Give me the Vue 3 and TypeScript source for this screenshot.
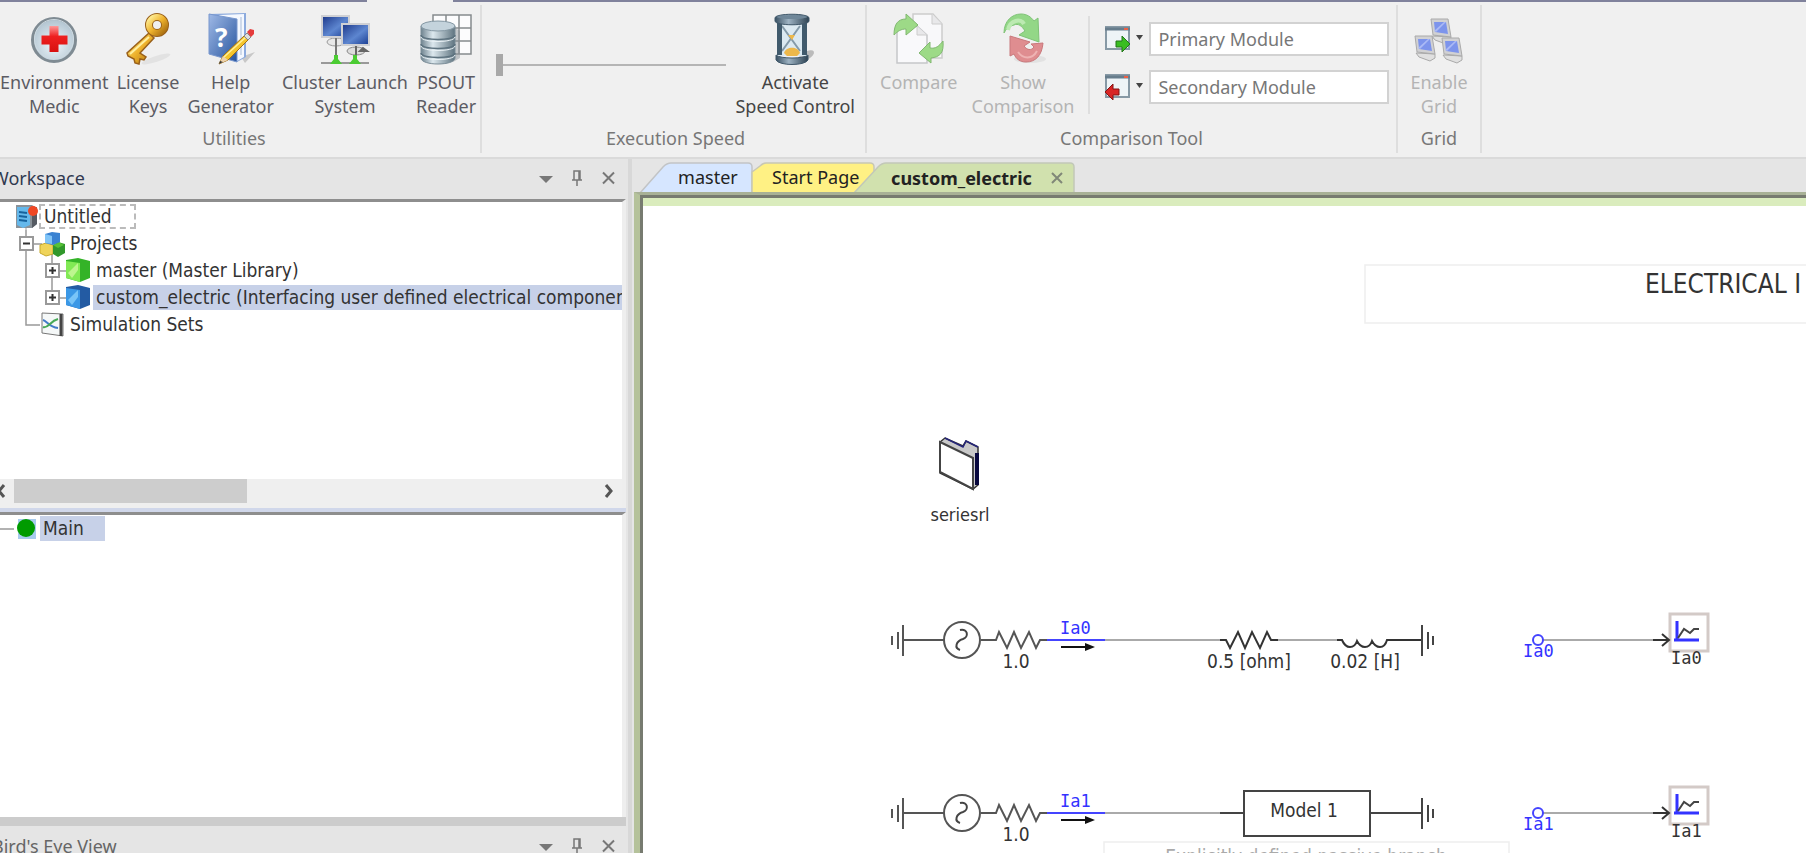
<script setup lang="ts">
import { ref } from 'vue'

interface Row {
  y: number
  name: string
}

const speed = ref(0)
const primary = ref('Primary Module')
const secondary = ref('Secondary Module')
const rows: Row[] = [
  { y: 442, name: 'Ia0' },
  { y: 615, name: 'Ia1' },
]
const windowButtons = ['Menu', 'Pin', 'Close']
</script>

<template>
  <div class="app">
    <header class="ribbon">
      <div class="ribbon-edge"><span class="edge-left"></span><span class="edge-right"></span></div>
      <div class="groups">
        <section class="group utilities">
          <div class="tools">
            <button class="tool">
              <svg width="52" height="52" viewBox="0 0 52 52">
                <defs>
                  <radialGradient id="medic" cx="50%" cy="60%" r="55%">
                    <stop offset="0" stop-color="#eef7fc" /><stop offset="1" stop-color="#b4c6d2" />
                  </radialGradient>
                  <linearGradient id="cross" x1="0" y1="0" x2="0" y2="1">
                    <stop offset="0" stop-color="#f99" /><stop offset=".4" stop-color="#ee2020" /><stop offset="1" stop-color="#d81010" />
                  </linearGradient>
                </defs>
                <circle cx="26" cy="27" r="21.500" fill="url(#medic)" stroke="#7f8b93" stroke-width="3" />
                <circle cx="26" cy="26" r="19.500" fill="none" stroke="#cfdbe2" stroke-width="1" />
                <path d="M21.500 13h9v9.500h9v9h-9V39h-9v-7.500h-8v-9h8z" fill="url(#cross)" />
              </svg>
              <span>Environment<br />Medic</span>
            </button>
            <button class="tool">
              <svg width="52" height="52" viewBox="0 0 52 52">
                <defs>
                  <linearGradient id="gold" x1="0" y1="0" x2="1" y2="1">
                    <stop offset="0" stop-color="#fff09a" /><stop offset=".5" stop-color="#eeb22c" /><stop offset="1" stop-color="#a86d10" />
                  </linearGradient>
                </defs>
                <ellipse cx="34" cy="46" rx="15" ry="3" fill="#e2e2e2" transform="rotate(-18 34 46)" />
                <path d="M27 20 32 25 18 40 24 44 22 47 18 46 17 51 13 50 12 46 6 43 5 40z" fill="url(#gold)" stroke="#99601a" stroke-width="1.500" />
                <path d="M27 24 8 41" stroke="#fff0a0" stroke-width="2" />
                <circle cx="35" cy="12" r="8" fill="none" stroke="#99601a" stroke-width="8" />
                <circle cx="35" cy="12" r="8" fill="none" stroke="url(#gold)" stroke-width="6" />
              </svg>
              <span>License<br />Keys</span>
            </button>
            <button class="tool">
              <svg width="52" height="52" viewBox="0 0 52 52">
                <defs>
                  <linearGradient id="book" x1="0" y1="0" x2="1" y2="1">
                    <stop offset="0" stop-color="#9fb9e6" /><stop offset="1" stop-color="#26549e" />
                  </linearGradient>
                </defs>
                <path d="M36 44l14-5-10 11z" fill="#c8c8c8" />
                <path d="M4 1 41 0v44l-9 5z" fill="#8caadd" />
                <path d="M14 2 39 1v43l-7 4z" fill="#f4f8ff" />
                <path d="M36 4v38" stroke="#a9bbd6" />
                <path d="M4 1 32 6v43L4 41z" fill="url(#book)" stroke="#7897ce" />
                <text x="10" y="34" class="book-mark">?</text>
                <path d="M14 51 18 43 40 22 44 26 23 47z" fill="#f4c52d" stroke="#9e6e18" />
                <path d="M19 44 41 24" stroke="#fff09b" stroke-width="1.500" />
                <path d="M14 51 18 43 23 47z" fill="#eed3ae" /><path d="M14 51l1-3 3 1z" fill="#333" />
                <path d="M39 23l3-3 4 4-3 3z" fill="#ddd" stroke="#888" />
                <path d="M42 19l3-3 4 1 0 4-3 3z" fill="#e53b3b" />
              </svg>
              <span>Help<br />Generator</span>
            </button>
            <button class="tool">
              <svg width="52" height="52" viewBox="0 0 52 52">
                <defs>
                  <linearGradient id="screen" x1="0" y1="0" x2="1" y2="1">
                    <stop offset="0" stop-color="#1b3688" /><stop offset=".55" stop-color="#5d86d0" /><stop offset="1" stop-color="#173a90" />
                  </linearGradient>
                </defs>
                <ellipse cx="17" cy="29" rx="9" ry="4" fill="#e8e8e8" stroke="#999" />
                <path d="M17 24v19" stroke="#777" stroke-width="2" />
                <rect x="3" y="3" width="27" height="21" fill="url(#screen)" stroke="#cfd0d4" stroke-width="2" />
                <ellipse cx="37" cy="38" rx="9" ry="4" fill="#ddd" stroke="#888" />
                <path d="M41 38l7 0-4-3zM37 32v12" stroke="#666" fill="#555" stroke-width="2" />
                <rect x="23" y="11" width="27" height="21" fill="url(#screen)" stroke="#cfd0d4" stroke-width="2" />
                <path d="M2 50h48" stroke="#999" stroke-width="2" />
                <path d="M15 42h4v4l4 5H11l4-5zM34 42h4v4l4 5H30l4-5z" fill="#4bcc32" />
              </svg>
              <span>Cluster Launch<br />System</span>
            </button>
            <button class="tool">
              <svg width="56" height="52" viewBox="0 0 56 52">
                <defs>
                  <linearGradient id="drum" x1="0" y1="0" x2="1" y2="0">
                    <stop offset="0" stop-color="#6f838f" /><stop offset=".35" stop-color="#dce8ee" /><stop offset="1" stop-color="#5f7480" />
                  </linearGradient>
                </defs>
                <path d="M15 2h38v39H15zM28 2v39M41 2v39M15 15h38M15 28h38" fill="#fcfcfd" stroke="#858a8d" stroke-width="1.500" />
                <path d="M36 14l6 4v27l-7 4z" fill="#8b9499" opacity=".5" />
                <path d="M3 13v32c0 8 34 8 34 0V13z" fill="url(#drum)" stroke="#7b8d98" />
                <ellipse cx="20" cy="13" rx="17" ry="5" fill="#c4d3dc" stroke="#8497a3" />
                <path d="M3 22c1 6 33 6 34 0M3 31c1 6 33 6 34 0M3 40c1 6 33 6 34 0" fill="none" stroke="#5d727f" stroke-width="1.500" />
                <path d="M3 24c1 6 33 6 34 0M3 33c1 6 33 6 34 0M3 42c1 6 33 6 34 0" fill="none" stroke="#eaf2f6" />
              </svg>
              <span>PSOUT<br />Reader</span>
            </button>
          </div>
          <h2 class="group-title util-title">Utilities</h2>
        </section>

        <section class="group speed">
          <div class="tools">
            <input v-model.number="speed" class="slider" type="range" min="0" max="100" aria-label="Execution speed" />
            <button class="tool strong">
              <svg width="52" height="52" viewBox="0 0 52 52">
                <defs>
                  <linearGradient id="steel" x1="0" y1="0" x2="1" y2="0">
                    <stop offset="0" stop-color="#395062" /><stop offset=".4" stop-color="#9db2c2" /><stop offset="1" stop-color="#2d4252" />
                  </linearGradient>
                </defs>
                <ellipse cx="37" cy="43" rx="9" ry="4" fill="#bbb" transform="rotate(-30 37 43)" />
                <path d="M8 8h30v35H8z" fill="#dbe9f1" />
                <path d="M13 13 31 38M31 13 13 38" stroke="#849aa9" stroke-width="2" fill="none" />
                <path d="M19 22h7l-3 5zM15 40c2-7 14-7 16 0l-3 3H18z" fill="#edb84a" />
                <path d="M8 8h5v34H8zM33 8h5v34h-5z" fill="#405a6c" />
                <path d="M6 5c0-5 34-5 34 0v3c0 5-34 5-34 0z" fill="url(#steel)" stroke="#40586a" />
                <path d="M7 42c4 4 28 4 32 0v5c-3 6-29 6-32 0z" fill="url(#steel)" stroke="#40586a" />
                <ellipse cx="23" cy="4" rx="15" ry="2" fill="#6f8799" />
              </svg>
              <span>Activate<br />Speed Control</span>
            </button>
          </div>
          <h2 class="group-title speed-title">Execution Speed</h2>
        </section>

        <section class="group comparison">
          <div class="tools">
            <button class="tool" disabled>
              <svg width="52" height="52" viewBox="0 0 52 52">
                <path d="M20 1h20l9 10v34H20z" fill="#f8f8fa" stroke="#ccc" stroke-width="1.500" /><path d="M39 1v10h10" fill="#e8e8ea" stroke="#ccc" />
                <path d="M4 13h20l10 9v28H4z" fill="#f9f9fb" stroke="#c5c6c9" stroke-width="1.500" /><path d="M24 13v9h10" fill="#e8e8ea" stroke="#ccc" />
                <path d="M1 22C1 11 5 6 13 6V1l12 11-12 10v-6c-5 0-8 2-12 6z" fill="#9dda87" stroke="#81b871" />
                <path d="M50 28c1 12-3 16-12 17v5L26 40l11-11v6c6 1 9-2 13-7z" fill="#9dda87" stroke="#81b871" />
              </svg>
              <span>Compare<br />&nbsp;</span>
            </button>
            <button class="tool" disabled>
              <svg width="52" height="52" viewBox="0 0 52 52">
                <ellipse cx="33" cy="46" rx="16" ry="4" fill="#e2e2e2" />
                <path d="M7 20C7 8 15 1 24 1c6 0 10 3 13 7l4-3 1 24-20-7 6-4c-3-5-7-8-11-6-5 1-8 4-10 8z" fill="#93d787" stroke="#7fc377" />
                <path d="M11 17c2-10 13-12 16-6" fill="none" stroke="#bceab2" stroke-width="4" />
                <path d="M13 23 33 29l-6 4c3 4 7 5 10 1l-3-3 12-1c-1 12-7 19-17 19-6 0-10-3-12-8l-4 2z" fill="#df8d90" stroke="#c9797c" />
                <path d="M21 39c5 7 14 8 19-1" fill="none" stroke="#eeb3b3" stroke-width="2" />
              </svg>
              <span>Show<br />Comparison</span>
            </button>
            <div class="modules">
              <div class="module">
                <button class="pick" aria-label="Choose primary module">
                  <svg width="42" height="28" viewBox="0 0 42 28">
                    <rect x="2" y="2" width="23" height="22" fill="#eef4f7" stroke="#8799a5" stroke-width="2" /><path d="M1 4h25" stroke="#677d8c" stroke-width="3" /><path d="M20 4h4" stroke="#ed6045" stroke-width="2" />
                    <path d="M12 16h6v-5l8 8-8 8v-5h-6z" fill="#39bd20" stroke="#23751b" />
                    <path d="M32 10h7l-3.500 5z" fill="#444" />
                  </svg>
                </button>
                <input id="primary" v-model="primary" class="field" aria-label="Primary module" />
              </div>
              <div class="module">
                <button class="pick" aria-label="Choose secondary module">
                  <svg width="42" height="28" viewBox="0 0 42 28">
                    <rect x="2" y="2" width="23" height="22" fill="#eef4f7" stroke="#8799a5" stroke-width="2" /><path d="M1 4h25" stroke="#677d8c" stroke-width="3" /><path d="M20 4h4" stroke="#ed6045" stroke-width="2" />
                    <path d="M15 16H9v-5l-8 8 8 8v-5h6z" fill="#d82525" stroke="#831515" />
                    <path d="M32 10h7l-3.500 5z" fill="#444" />
                  </svg>
                </button>
                <input id="secondary" v-model="secondary" class="field" aria-label="Secondary module" />
              </div>
            </div>
          </div>
          <h2 class="group-title compare-title">Comparison Tool</h2>
        </section>

        <section class="group grid-group">
          <div class="tools">
            <button class="tool" disabled>
              <svg width="52" height="52" viewBox="0 0 52 52">
                <path d="M26 20 14 30M26 20l13 12" stroke="#bbb" stroke-width="2" />
                <g v-for="(m, i) in [[18, 6], [2, 23], [29, 25]]" :key="i" :transform="`translate(${m[0]} ${m[1]})`">
                  <path d="M1 17l3 4 11 4 5-3 0-4z" fill="#e0e0e0" stroke="#aaa" />
                  <path d="M0 0h17l3 18-18-2z" fill="#d1d1d3" stroke="#aaa" />
                  <path d="M3 3h12l2 12L4 13z" fill="#7d94ec" /><path d="M3 12 13 3l2 0L5 13z" fill="#abbaf5" />
                </g>
              </svg>
              <span>Enable<br />Grid</span>
            </button>
          </div>
          <h2 class="group-title">Grid</h2>
        </section>
      </div>
    </header>

    <main class="work">
      <aside class="side">
        <div class="caption">
          <h2>Workspace</h2>
          <button v-for="b in windowButtons" :key="b" class="win" :aria-label="b">
            <svg width="16" height="18" viewBox="0 0 16 18">
              <path v-if="b === 'Menu'" d="M1 7h14l-7 7z" fill="#777" />
              <path v-else-if="b === 'Pin'" d="M5 2h6v9H5zM10 2v9M3 11h10M8 11v6" fill="none" stroke="#777" stroke-width="1.500" />
              <path v-else d="M3 3.500l11 11M14 3.500l-11 11" stroke="#777" stroke-width="2" />
            </svg>
          </button>
        </div>
        <div class="pane tree-pane">
          <ul class="tree">
            <li>
              <svg width="39" height="27" viewBox="0 0 39 27">
                <path d="M16 2h16l5 3v16l-5 4H16z" fill="#8a9299" /><path d="M32 6l5-2v17l-5 4z" fill="#565b63" />
                <path d="M17 4h13v18l-7 3-6-3z" fill="#65b8eb" /><path d="M19 9l8 1M19 13l8 1M19 17l8 1" stroke="#17639d" stroke-width="2" />
                <circle cx="33" cy="8" r="5" fill="#ef4824" /><path d="M26 25v2" stroke="#999" />
              </svg>
              <span class="label focus">Untitled</span>
            </li>
            <li>
              <svg width="67" height="27" viewBox="0 0 67 27">
                <path d="M26 0v27M34 14h8M52 22v5" stroke="#999" stroke-width="1.500" />
                <path d="M40 15l6-2 7 2v9l-7 2-6-3z" fill="#efd45a" stroke="#c7a92d" />
                <path d="M53 15l5-3 7 2v9l-7 4-5-3z" fill="#31982b" /><path d="M53 15l6-3 5 3-6 3z" fill="#57c136" />
                <path d="M45 4l7-2 8 1v9l-7 3-8-2z" fill="#3982d2" /><path d="M45 4l7 2v8l-7-1z" fill="#80c4f7" />
              </svg>
              <button class="expander parent" aria-label="Collapse projects"><svg width="15" height="15" viewBox="2 2 11 11"><path d="M4 7.500h7" /></svg></button>
              <span class="label">Projects</span>
            </li>
            <li>
              <svg width="93" height="27" viewBox="0 0 93 27">
                <path d="M26 0v27M52 0v27M60 14h6" stroke="#999" stroke-width="1.500" />
                <path d="M66 3l12-2 12 3v17l-10 4-14-4z" fill="#34b328" /><path d="M66 4l14 2v19l-14-4z" fill="#82ea55" /><path d="M68 16l10-10v7l-6 8z" fill="#bdf68f" />
              </svg>
              <button class="expander child" aria-label="Expand master"><svg width="15" height="15" viewBox="2 2 11 11"><path d="M4 7.500h7M7.500 4v7" /></svg></button>
              <span class="label">master (Master Library)</span>
            </li>
            <li>
              <svg width="93" height="27" viewBox="0 0 93 27">
                <path d="M26 0v27M52 0v14M60 14h6" stroke="#999" stroke-width="1.500" />
                <path d="M66 3l12-2 12 3v17l-10 4-14-4z" fill="#235ba3" /><path d="M66 4l14 2v19l-14-4z" fill="#3b98e6" /><path d="M68 16l10-10v7l-6 8z" fill="#79c5f8" />
              </svg>
              <button class="expander child" aria-label="Expand custom_electric"><svg width="15" height="15" viewBox="2 2 11 11"><path d="M4 7.500h7M7.500 4v7" /></svg></button>
              <span class="label picked wide">custom_electric (Interfacing user defined electrical components)</span>
            </li>
            <li>
              <svg width="67" height="27" viewBox="0 0 67 27">
                <path d="M26 0v14h14" fill="none" stroke="#999" stroke-width="1.500" />
                <path d="M42 2l21 1v22l-21-3z" fill="#f5f8f8" stroke="#777" /><path d="M61 3v22" stroke="#444" stroke-width="3" />
                <path d="M43 9c4 1 6 7 15 8" fill="none" stroke="#427bc8" stroke-width="2" /><path d="M43 16c5 2 7-6 15-8" fill="none" stroke="#47a957" stroke-width="2" />
              </svg>
              <span class="label">Simulation Sets</span>
            </li>
          </ul>
          <div class="scroll">
            <button aria-label="Scroll left"><svg width="12" height="24"><path d="M4 6l-5 6 5 6" /></svg></button>
            <span class="thumb"></span>
            <button class="right" aria-label="Scroll right"><svg width="26" height="24"><path d="M10 6l5 6-5 6" /></svg></button>
          </div>
        </div>
        <div class="splitter"></div>
        <div class="pane main-pane">
          <div class="main-row">
            <svg width="40" height="25"><path d="M0 13h14" stroke="#999" stroke-width="1.500" /><rect x="18" y="3" width="18" height="20" fill="#a7cbed" /><circle cx="26" cy="12" r="9" fill="#009b00" /></svg>
            <span class="label picked main-label">Main</span>
          </div>
        </div>
        <div class="divider"></div>
        <div class="caption bird">
          <h2>Bird's Eye View</h2>
          <button v-for="b in windowButtons" :key="b" class="win" :aria-label="b">
            <svg width="16" height="18" viewBox="0 0 16 18">
              <path v-if="b === 'Menu'" d="M1 7h14l-7 7z" fill="#777" />
              <path v-else-if="b === 'Pin'" d="M5 2h6v9H5zM10 2v9M3 11h10M8 11v6" fill="none" stroke="#777" stroke-width="1.500" />
              <path v-else d="M3 3.500l11 11M14 3.500l-11 11" stroke="#777" stroke-width="2" />
            </svg>
          </button>
        </div>
      </aside>

      <section class="editor">
        <nav class="tabs">
          <button class="tab blue">
            <svg class="shape" width="112" height="30"><path d="M0 30 23 4q4-4 8-4h77q4 0 4 4v26z" fill="#d6e6ff" stroke="#c2c4c6" stroke-width="1.500" /></svg>
            <span>master</span>
          </button>
          <button class="tab yellow">
            <svg class="shape" width="122" height="30"><path d="M0 30V9l8-6q3-3 6-3h104q4 0 4 4v26z" fill="#fff184" stroke="#c8c7b4" stroke-width="1.500" /></svg>
            <span>Start Page</span>
          </button>
          <button class="tab green">
            <svg class="shape" width="220" height="30"><path d="M0 30 24 4q4-4 8-4h184q4 0 4 4v26z" fill="#d1e1ae" stroke="#c2c8b8" stroke-width="1.500" /></svg>
            <span>custom_electric</span>
            <svg class="shut" width="14" height="14"><path d="M2 2l10 10M12 2L2 12" stroke="#808878" stroke-width="2" /></svg>
          </button>
        </nav>
        <div class="frame">
          <svg class="schematic" role="img" aria-label="Circuit schematic">
            <rect x="722" y="67" width="500" height="58" fill="none" stroke="#eee" stroke-width="1.500" />
            <text x="1002" y="95" class="heading">ELECTRICAL I</text>

            <g transform="translate(0 9)">
              <path d="M297 235l5-4 18 8 3-5 12 6v38l-5 4-33-16z" fill="#c9c9c9" stroke="#333" stroke-width="1.500" />
              <path d="M302 231l18 9 3-6 12 6" fill="none" stroke="#26267a" stroke-width="1.500" />
              <path d="M297 235l33 16v31l-33-17z" fill="#fff" stroke="#444" stroke-width="2" />
              <path d="M334 246v32" stroke="#08083e" stroke-width="4" />
            </g>
            <text x="317" y="323" class="t small mid">seriesrl</text>

            <g v-for="(row, i) in rows" :key="row.name" :transform="`translate(0 ${row.y})`" fill="none" stroke-width="2">
              <path d="M249-4V5M255-8V9M260-15V16" stroke="#555" />
              <path d="M260 0H301M338 0H353l3-8 8 16 7-16 7 16 8-16 7 16 4-8h7" stroke="#555" />
              <circle cx="319" cy="0" r="18" stroke="#555" />
              <path d="M317-10C325-12 326-3 320-1C313 1 311 8 317 10" stroke="#444" />
              <path d="M404 0H462" stroke="#44f" />
              <path d="M462 0H577" stroke="#aaa" />
              <path d="M418 7H446" stroke="#111" /><path d="M442 3l10 4-10 4z" fill="#111" />
              <text x="417" y="-6" class="signal">{{ row.name }}</text>
              <text x="373" y="28" class="t mid">1.0</text>
              <g v-if="i === 0">
                <path d="M577 0h6l4 8 8-16 7 16 7-16 8 16 7-16 4 8h7" stroke="#333" />
                <path d="M635 0H695" stroke="#aaa" />
                <path d="M694 0h5q3 7 8 7t7-6q3 6 8 6t7-6q3 6 8 6t7-7H779" stroke="#333" />
                <text x="606" y="28" class="t mid">0.5 [ohm]</text>
                <text x="722" y="28" class="t mid">0.02 [H]</text>
              </g>
              <g v-else>
                <path d="M577 0h24M727 0h52M601-22H727V23H601z" stroke="#444" />
                <text x="661" y="4" class="t mid">Model 1</text>
              </g>
              <path d="M779-15V16M785-8V9M790-4V5" stroke="#444" />
              <path d="M900 0H1012" stroke="#aaa" />
              <circle cx="895" cy="0" r="5" stroke="#44f" />
              <text x="880" y="17" class="signal">{{ row.name }}</text>
              <rect x="1027" y="-26" width="38" height="37" fill="#fff" stroke="#d3cac7" stroke-width="3" />
              <path d="M1034-19V1M1031 0H1056" stroke="#33f" stroke-width="3" />
              <path d="M1035-2l6-9 6 4 4-4 5 0" stroke="#444" />
              <path d="M1010 0H1026M1019-6l7 6-7 6" stroke="#333" />
              <text x="1028" y="24" class="signal dark">{{ row.name }}</text>
            </g>

            <rect x="461" y="644" width="405" height="60" fill="none" stroke="#eee" stroke-width="1.500" />
            <text x="663" y="665" class="t mid note">Explicitly defined passive branch</text>
          </svg>
        </div>
      </section>
    </main>
  </div>
</template>

<style>
body { margin: 0; background: #f0f0f0; }
</style>

<style scoped>
* { box-sizing: border-box; }
.app { height: 100vh; display: flex; flex-direction: column; overflow: hidden; background: #f0f0f0; color: #333; font-family: "Noto Sans", "Open Sans", sans-serif; font-size: 18px; }
button { font: inherit; color: inherit; background: none; border: 0; padding: 0; margin: 0; }
svg { display: block; flex: none; }
h2 { margin: 0; font-weight: 400; font-size: 18px; }

.ribbon { flex: none; border-bottom: 2px solid #dadada; height: 159px; }
.ribbon-edge { display: flex; gap: 86px; height: 2px; }
.ribbon-edge span { background: #80829c; }
.edge-left { width: 367px; }
.edge-right { flex: 1; }
.groups { display: flex; height: 155px; padding: 3px 0; }
.group { display: flex; flex-direction: column; border-right: 2px solid #dedede; height: 148px; padding-top: 8px; }
.tools { display: flex; height: 105px; }
.group-title { text-align: center; color: #777; line-height: 24px; margin-top: 8px; }
.tool { display: flex; flex-direction: column; align-items: center; color: #5c5c64; line-height: 24px; white-space: nowrap; }
.tool span { margin-top: 5px; }
.tool.strong { color: #444; }
.tool:disabled { color: #b4b4b4; }
.utilities { width: 482px; }
.utilities .tools { gap: 8px; }
.util-title { padding-right: 12px; }
.book-mark { font-family: "Noto Sans", sans-serif; font-size: 26px; font-weight: 700; fill: #fff; }
.speed { width: 385px; padding-left: 14px; padding-right: 10px; }
.speed .tools { justify-content: space-between; }
.slider { appearance: none; width: 230px; height: 22px; margin: 41px 0 0; background: linear-gradient(#b5b5b5, #b5b5b5) center / 100% 2px no-repeat; }
.slider::-webkit-slider-thumb { appearance: none; width: 7px; height: 22px; background: #a8a8a8; }
.comparison { width: 531px; padding-left: 13px; }
.comparison .tools { gap: 14px; }
.compare-title { padding-right: 13px; }
.modules { display: flex; flex-direction: column; gap: 14px; border-left: 2px solid #dedede; margin-top: 3px; height: 98px; padding: 6px 0 0 14px; }
.module { display: flex; gap: 3px; align-items: center; height: 34px; }
.field { width: 240px; height: 34px; border: 2px solid #d2d2d2; background: #fff; color: #777; font: inherit; padding: 0 7px; border-radius: 0; }
.grid-group { width: 84px; align-items: center; }

.work { flex: 1; min-height: 0; display: flex; background: #e5e5e5; }
.side { width: 35%; flex: none; display: flex; flex-direction: column; border-right: 4px solid #d8d8d8; padding-right: 2px; color: #222a3a; }
.caption { display: flex; align-items: center; gap: 15px; height: 40px; flex: none; padding-right: 10px; padding-bottom: 2px; }
.caption h2 { flex: 1; text-indent: -8px; color: #303950; }
.caption.bird h2 { color: #666; }
.win { display: flex; }
.pane { background: #fff; border-top: 3px solid #8e8e8e; border-right: 4px solid #eee; overflow: hidden; }
.tree-pane { height: 309px; flex: none; display: flex; flex-direction: column; }
.tree { list-style: none; margin: 0; padding: 1px 0 0; flex: 1; }
.tree li { position: relative; display: flex; align-items: center; height: 27px; }
.label { line-height: 25px; padding: 0 3px; white-space: nowrap; font-family: "DejaVu Sans Condensed", "DejaVu Sans", sans-serif; font-size: 19px; font-stretch: condensed; color: #333; }
.focus { border: 2px dashed #bbb; line-height: 21px; padding-right: 22px; }
.picked { background: #c7d1e8; }
.wide { flex: 1; }
.expander { position: absolute; top: 6px; }
.expander svg { border: 2px solid #999; background: #fff; overflow: hidden; stroke: #333; stroke-width: 2; width: 15px; height: 15px; }
.parent { left: 19px; }
.child { left: 45px; }
.scroll { display: flex; height: 29px; background: #efefef; padding-bottom: 5px; }
.scroll svg { fill: none; stroke: #555; stroke-width: 3; }
.thumb { width: 233px; background: #cdcdcd; margin-left: 2px; }
.right { margin-left: auto; }
.splitter { height: 4px; background: #d0d7ea; flex: none; }
.main-pane { flex: 1; }
.main-row { display: flex; padding-top: 1px; }
.main-label { width: 65px; }
.divider { height: 9px; background: #ccc; flex: none; }
.bird { height: 27px; overflow: hidden; align-items: flex-start; padding-top: 8px; }
.bird h2 { line-height: 24px; }
.bird .win { padding-top: 3px; }

.editor { flex: 1; min-width: 0; display: flex; flex-direction: column; padding-left: 2px; }
.tabs { display: flex; height: 33px; flex: none; padding: 4px 0 0 6px; }
.tab { position: relative; height: 30px; line-height: 28px; white-space: nowrap; color: #222; display: flex; }
.tab span { position: relative; }
.shape { position: absolute; inset: 0; overflow: visible; }
.blue { width: 112px; padding-left: 38px; }
.yellow { width: 102px; padding-left: 20px; }
.green { width: 220px; padding-left: 37px; font-weight: 700; align-items: center; }
.shut { position: relative; margin-left: auto; margin-right: 10px; }
.frame { position: relative; flex: 1; min-height: 0; border-left: 6px solid #b5c29b; border-top: 3px solid #a8b196; }
.schematic { width: 100%; height: 100%; background: #fff; border-left: 3px solid #777b70; border-top: 3px solid #777b70; box-shadow: inset 0 8px #daecbd; overflow: hidden; }
.schematic text { stroke: none; }
.t { font-family: "DejaVu Sans Condensed", "DejaVu Sans", sans-serif; font-stretch: condensed; font-size: 19px; fill: #333; }
.t.small { font-size: 18px; }
.mid { text-anchor: middle; }
.signal { font-family: "DejaVu Sans Mono", monospace; font-size: 17px; fill: #33f; }
.signal.dark { fill: #333; }
.heading { font-family: "DejaVu Sans Condensed", "DejaVu Sans", sans-serif; font-stretch: condensed; font-size: 26px; fill: #333; }
.t.note { fill: #aaa; }
</style>
